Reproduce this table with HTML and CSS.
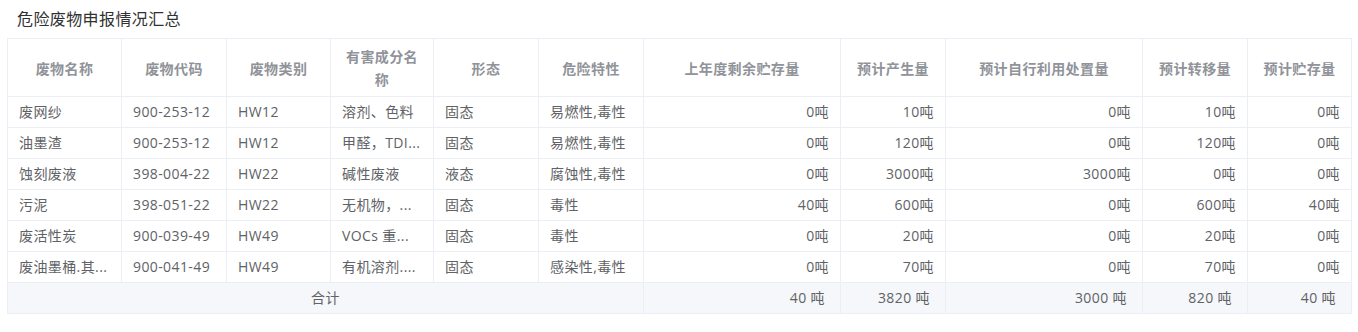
FILE: index.html
```html
<!DOCTYPE html>
<html lang="zh">
<head>
<meta charset="utf-8">
<link rel="stylesheet" href="styles.css">
</head>
<body>
<div class="page">
  <h3 class="title">危险废物申报情况汇总</h3>
  <table class="grid">
    <colgroup>
      <col class="w114"><col class="w105"><col class="w104"><col class="w103"><col class="w105"><col class="w105"><col class="w197"><col class="w105"><col class="w197"><col class="w105"><col class="w104">
    </colgroup>
    <thead>
      <tr>
        <th>废物名称</th><th>废物代码</th><th>废物类别</th><th>有害成分名称</th><th>形态</th><th>危险特性</th><th>上年度剩余贮存量</th><th>预计产生量</th><th>预计自行利用处置量</th><th>预计转移量</th><th>预计贮存量</th>
      </tr>
    </thead>
    <tbody>
      <tr><td>废网纱</td><td>900-253-12</td><td>HW12</td><td>溶剂、色料</td><td>固态</td><td>易燃性,毒性</td><td class="num">0吨</td><td class="num">10吨</td><td class="num">0吨</td><td class="num">10吨</td><td class="num">0吨</td></tr>
      <tr><td>油墨渣</td><td>900-253-12</td><td>HW12</td><td>甲醛，TDI...</td><td>固态</td><td>易燃性,毒性</td><td class="num">0吨</td><td class="num">120吨</td><td class="num">0吨</td><td class="num">120吨</td><td class="num">0吨</td></tr>
      <tr><td>蚀刻废液</td><td>398-004-22</td><td>HW22</td><td>碱性废液</td><td>液态</td><td>腐蚀性,毒性</td><td class="num">0吨</td><td class="num">3000吨</td><td class="num">3000吨</td><td class="num">0吨</td><td class="num">0吨</td></tr>
      <tr><td>污泥</td><td>398-051-22</td><td>HW22</td><td>无机物，...</td><td>固态</td><td>毒性</td><td class="num">40吨</td><td class="num">600吨</td><td class="num">0吨</td><td class="num">600吨</td><td class="num">40吨</td></tr>
      <tr><td>废活性炭</td><td>900-039-49</td><td>HW49</td><td>VOCs 重...</td><td>固态</td><td>毒性</td><td class="num">0吨</td><td class="num">20吨</td><td class="num">0吨</td><td class="num">20吨</td><td class="num">0吨</td></tr>
      <tr><td>废油墨桶.其...</td><td>900-041-49</td><td>HW49</td><td>有机溶剂....</td><td>固态</td><td>感染性,毒性</td><td class="num">0吨</td><td class="num">70吨</td><td class="num">0吨</td><td class="num">70吨</td><td class="num">0吨</td></tr>
    </tbody>
    <tfoot>
      <tr><td colspan="6" class="total">合计</td><td class="num">40 吨</td><td class="num">3820 吨</td><td class="num">3000 吨</td><td class="num">820 吨</td><td class="num">40 吨</td></tr>
    </tfoot>
  </table>
</div>
</body>
</html>
```

FILE: styles.css
```css
html, body {
  margin: 0;
  padding: 0;
  background: #ffffff;
}
body {
  font-family: "Open Sans", "Noto Sans CJK SC", sans-serif;
  font-size: 14px;
  letter-spacing: 0.4px;
  color: #606266;
}
.page {
  padding: 7px 7px;
}
.title {
  margin: 0;
  padding: 0 0 0 10px;
  font-size: 16px;
  font-weight: normal;
  color: #303133;
  line-height: 24px;
  height: 31px;
}
.grid {
  width: 1344px;
  table-layout: fixed;
  border-collapse: collapse;
  border: 1px solid #ebeef5;
}
.w114 { width: 114px; }
.w105 { width: 105px; }
.w104 { width: 104px; }
.w103 { width: 103px; }
.w197 { width: 197px; }
.grid th,
.grid td {
  border: 1px solid #ebeef5;
  padding: 4px 11px;
  line-height: 22px;
  white-space: nowrap;
  overflow: hidden;
  text-align: left;
  font-weight: normal;
}
.grid th {
  padding: 6px 11px 5px;
  line-height: 23px;
  text-align: center;
  color: #909399;
  font-weight: bold;
  white-space: normal;
}
.grid td.num {
  text-align: right;
}
.grid tfoot td {
  background: #f5f7fa;
}
.grid tfoot td.num {
  padding-right: 15px;
}
.grid tfoot td.total {
  text-align: center;
}
```
